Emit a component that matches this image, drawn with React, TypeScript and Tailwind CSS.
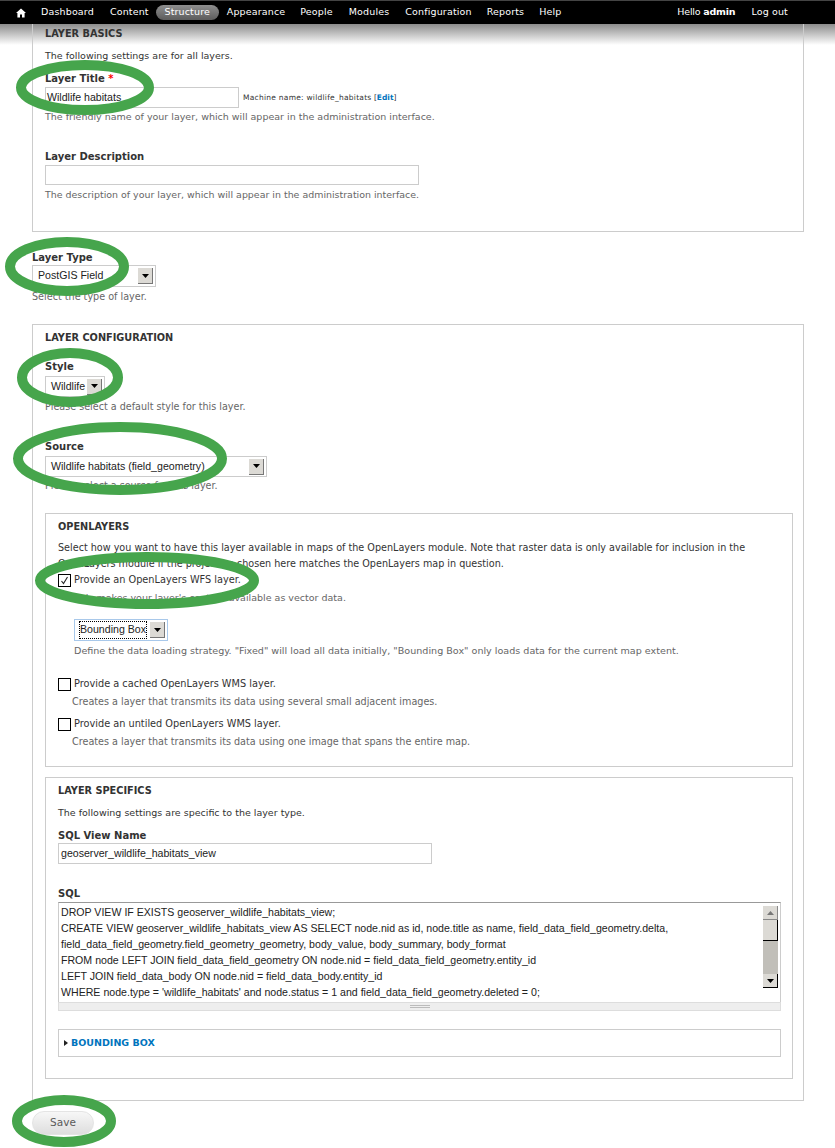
const sans = "font-['DejaVu_Sans',sans-serif]";

function Ellipse({ x, y, w, h, sw = 10 }: { x: number; y: number; w: number; h: number; sw?: number }) {
  return (
    <ellipse
      cx={x + w / 2}
      cy={y + h / 2}
      rx={w / 2 - sw / 2}
      ry={h / 2 - sw / 2}
      fill="none"
      stroke="#46a54c"
      strokeWidth={sw}
    />
  );
}

function Label({ children }: { children: React.ReactNode }) {
  return <div className="text-[10px] font-bold leading-[14px] text-[#333]">{children}</div>;
}

function Desc({ children, className = "", size = "text-[9.5px]" }: { children: React.ReactNode; className?: string; size?: string }) {
  return <div className={`${size} leading-[14px] text-[#666] ${className}`}>{children}</div>;
}

function Heading({ children }: { children: React.ReactNode }) {
  return <div className="text-[9.75px] font-bold uppercase leading-[14px] text-[#333]">{children}</div>;
}

function Arrow({ up }: { up?: boolean }) {
  return (
    <svg width="7" height="4" viewBox="0 0 7 4">
      <path d={up ? "M3.5 0 L7 4 L0 4 Z" : "M0 0 L7 0 L3.5 4 Z"} fill={up ? "#777" : "#000"} />
    </svg>
  );
}

function Select({ text, width, focus, tall }: { text: string; width: number; focus?: boolean; tall?: boolean }) {
  return (
    <div
      style={{ width }}
      className={`flex items-center justify-between border bg-white pr-[2px] pl-[5px] font-['Liberation_Sans',sans-serif] text-[10.6px] text-[#222] ${
        tall ? "h-[22px]" : "h-[21px]"
      } ${focus ? "border-[#a8c8ea]" : "border-[#ccc]"}`}
    >
      <span className={focus ? "outline-1 outline-dotted outline-black" : ""}>{text}</span>
      <span className="flex h-[16px] w-[15px] items-center justify-center border-r border-b border-[#777] bg-[#dcdad5]">
        <Arrow />
      </span>
    </div>
  );
}

function Check({ checked }: { checked?: boolean }) {
  return (
    <span className="flex h-[13px] w-[13px] shrink-0 items-center justify-center border border-black bg-white">
      {checked && (
        <svg width="9" height="9" viewBox="0 0 9 9">
          <path d="M1.5 5 L3.5 7.5 L7.5 1" fill="none" stroke="#222" strokeWidth="1.1" />
        </svg>
      )}
    </span>
  );
}

export default function App() {
  return (
    <div className={`relative h-[1148px] w-[835px] overflow-hidden bg-white ${sans}`}>
      {/* Toolbar */}
      <div className="absolute top-0 left-0 z-20 h-[24px] w-full border-t border-[#444] bg-black text-[9.5px] tracking-[0.15px] text-white">
        <div className="flex h-[23px] items-center pr-[47px] pl-[16px]">
          <svg width="10" height="10" viewBox="0 0 10 10" className="mr-[15px]">
            <path d="M5 0.5 L10 5 L8.6 5 L8.6 9.5 L6 9.5 L6 6.5 L4 6.5 L4 9.5 L1.4 9.5 L1.4 5 L0 5 Z" fill="#fff" />
          </svg>
          <span>Dashboard</span>
          <span className="ml-[16px]">Content</span>
          <span className="ml-[7px] flex h-[15px] w-[63px] items-center justify-center rounded-full bg-gradient-to-b from-[#8f8f8f] to-[#5c5c5c]">
            Structure
          </span>
          <span className="ml-[8px]">Appearance</span>
          <span className="ml-[15px]">People</span>
          <span className="ml-[16px]">Modules</span>
          <span className="ml-[16px]">Configuration</span>
          <span className="ml-[15px]">Reports</span>
          <span className="ml-[15px]">Help</span>
          <span className="ml-auto tracking-[-0.2px]">
            Hello <b>admin</b>
          </span>
          <span className="ml-[16px]">Log out</span>
        </div>
      </div>
      <div className="absolute top-[24px] left-0 h-[21px] w-full bg-gradient-to-b from-[#8c8c8c] to-transparent" />

      {/* Page */}
      <div className="relative px-[32px] pt-[1px]">
        <div className="h-[231px] w-[772px] border-x border-b border-[#ccc] px-[12px] pt-[26px]">
          <Heading>Layer basics</Heading>
          <div className="mt-[8px] text-[9.5px] leading-[14px] text-[#333]">The following settings are for all layers.</div>
          <div className="mt-[9px]">
            <Label>
              Layer Title <span className="text-[#f00]">*</span>
            </Label>
            <div className="mt-[1px] flex items-center">
              <div className="flex h-[21px] w-[194px] items-center border border-[#ccc] pl-[1px] font-['Liberation_Sans',sans-serif] text-[10.6px] text-[#222]">
                Wildlife habitats
              </div>
              <span className="ml-[4px] text-[7.5px] font-normal text-[#333]">
                <span className="tracking-[0.25px]">Machine name: wildlife_habitats</span> [<span className="font-bold text-[#0074bd]">Edit</span>]
              </span>
            </div>
            <Desc className="mt-[2px]">The friendly name of your layer, which will appear in the administration interface.</Desc>
          </div>
          <div className="mt-[26px]">
            <Label>Layer Description</Label>
            <div className="mt-[1px] h-[20px] w-[374px] border border-[#ccc]" />
            <Desc className="mt-[3px]" size="text-[9.45px]">The description of your layer, which will appear in the administration interface.</Desc>
          </div>
        </div>

        <div className="mt-[19px]">
          <Label>Layer Type</Label>
          <Select text="PostGIS Field" width={124} tall />
          <Desc className="mt-[3px]" size="text-[9.65px]">Select the type of layer.</Desc>
        </div>

        <div className="mt-[20px] h-[777px] w-[772px] border border-[#ccc] px-[12px] pt-[6px]">
          <Heading>Layer configuration</Heading>
          <div className="mt-[15px]">
            <Label>Style</Label>
            <div className="mt-[2px]">
              <Select text="Wildlife" width={60} />
            </div>
            <Desc className="mt-[3px]" size="text-[9.6px]">Please select a default style for this layer.</Desc>
          </div>
          <div className="mt-[26px]">
            <Label>Source</Label>
            <div className="mt-[2px]">
              <Select text="Wildlife habitats (field_geometry)" width={222} />
            </div>
            <Desc className="mt-[2px]" size="text-[9.6px]">Please select a source for this layer.</Desc>
          </div>

          <div className="mt-[20px] h-[254px] w-[748px] border border-[#ccc] px-[12px] pt-[6px]">
            <Heading>OpenLayers</Heading>
            <div className="mt-[6px] text-[9.63px] leading-[16px] text-[#333]">
              Select how you want to have this layer available in maps of the OpenLayers module. Note that raster data is only available for inclusion in the
              <br />
              OpenLayers module if the projection chosen here matches the OpenLayers map in question.
            </div>
            <label className="mt-[1px] flex items-center gap-[3px] text-[9.75px] leading-[14px] text-[#333]">
              <Check checked />
              Provide an OpenLayers WFS layer.
            </label>
            <Desc className="mt-[4px] pl-[16px]">This makes your layer's content available as vector data.</Desc>
            <div className="mt-[14px] pl-[16px]">
              <Select text="Bounding Box" width={94} focus tall />
              <Desc className="mt-[3px]" size="text-[9.58px]">
                Define the data loading strategy. "Fixed" will load all data initially, "Bounding Box" only loads data for the current map extent.
              </Desc>
            </div>
            <label className="mt-[19px] flex items-center gap-[3px] text-[9.75px] leading-[14px] text-[#333]">
              <Check />
              Provide a cached OpenLayers WMS layer.
            </label>
            <Desc className="mt-[4px] pl-[14px]" size="text-[9.63px]">Creates a layer that transmits its data using several small adjacent images.</Desc>
            <label className="mt-[8px] flex items-center gap-[3px] text-[9.75px] leading-[14px] text-[#333]">
              <Check />
              Provide an untiled OpenLayers WMS layer.
            </label>
            <Desc className="mt-[4px] pl-[14px]" size="text-[9.63px]">Creates a layer that transmits its data using one image that spans the entire map.</Desc>
          </div>

          <div className="mt-[10px] h-[302px] w-[748px] border border-[#ccc] px-[12px] pt-[6px]">
            <Heading>Layer specifics</Heading>
            <div className="mt-[8px] text-[9.5px] leading-[14px] text-[#333]">The following settings are specific to the layer type.</div>
            <div className="mt-[9px]">
              <Label>SQL View Name</Label>
              <div className="flex h-[21px] w-[374px] items-center border border-[#ccc] pl-[2px] font-['Liberation_Sans',sans-serif] text-[10.6px] text-[#222]">
                geoserver_wildlife_habitats_view
              </div>
            </div>
            <div className="mt-[23px]">
              <Label>SQL</Label>
              <div className="mt-[1px] flex h-[100px] w-[723px] border-x border-t border-x-[#ccc] border-t-[#999] bg-white">
                <div className="w-[702px] overflow-hidden whitespace-nowrap pt-[1px] pl-[2px] font-['Liberation_Sans',sans-serif] text-[10.6px] leading-[16px] text-[#222]">
                  DROP VIEW IF EXISTS geoserver_wildlife_habitats_view;
                  <br />
                  CREATE VIEW geoserver_wildlife_habitats_view AS SELECT node.nid as id, node.title as name, field_data_field_geometry.delta,
                  <br />
                  field_data_field_geometry.field_geometry_geometry, body_value, body_summary, body_format
                  <br />
                  FROM node LEFT JOIN field_data_field_geometry ON node.nid = field_data_field_geometry.entity_id
                  <br />
                  LEFT JOIN field_data_body ON node.nid = field_data_body.entity_id
                  <br />
                  WHERE node.type = 'wildlife_habitats' and node.status = 1 and field_data_field_geometry.deleted = 0;
                </div>
                <div className="relative w-[20px]">
                  <div className="mt-[3px] ml-[3px] flex h-[82px] w-[15px] flex-col bg-[#c1bfb9]">
                    <div className="flex h-[14px] items-center justify-center border-r border-b border-[#888] bg-[#dcdad5]">
                      <Arrow up />
                    </div>
                    <div className="h-[21px] border-r border-b border-black bg-[#dcdad5]" />
                    <div className="flex-1" />
                    <div className="flex h-[14px] items-center justify-center border-r border-b border-black bg-[#dcdad5]">
                      <Arrow />
                    </div>
                  </div>
                </div>
              </div>
              <div className="flex h-[9px] w-[723px] flex-col items-center justify-center gap-[1px] border border-[#ddd] bg-[#eee]">
                <div className="h-px w-[20px] bg-[#bbb]" />
                <div className="h-px w-[20px] bg-[#bbb]" />
              </div>
            </div>
            <div className="mt-[18px] flex h-[28px] w-[723px] items-center border border-[#ccc] pl-[5px]">
              <svg width="4" height="6" viewBox="0 0 4 6" className="mr-[3px]">
                <path d="M0 0 L4 3 L0 6 Z" fill="#222" />
              </svg>
              <span className="text-[9.5px] font-bold uppercase text-[#0074bd]">Bounding box</span>
            </div>
          </div>
        </div>

        <button className="mt-[10px] flex h-[24px] w-[62px] items-center justify-center rounded-full border border-[#e4e4e4] bg-gradient-to-b from-[#f7f7f7] to-[#dedede] text-[10.5px] text-[#5a5a5a]">
          Save
        </button>
      </div>

      {/* Hand-drawn highlights over the form */}
      <svg className="pointer-events-none absolute top-0 left-0 z-30" width="835" height="1148">
        <Ellipse x={16} y={60} w={138} h={55} />
        <Ellipse x={5} y={237} w={124} h={59} />
        <Ellipse x={17} y={348} w={106} h={59} />
        <Ellipse x={13} y={422} w={214} h={73} />
        <Ellipse x={35} y={552} w={224} h={57} />
        <Ellipse x={12} y={1095} w={104} h={52} />
      </svg>
    </div>
  );
}
